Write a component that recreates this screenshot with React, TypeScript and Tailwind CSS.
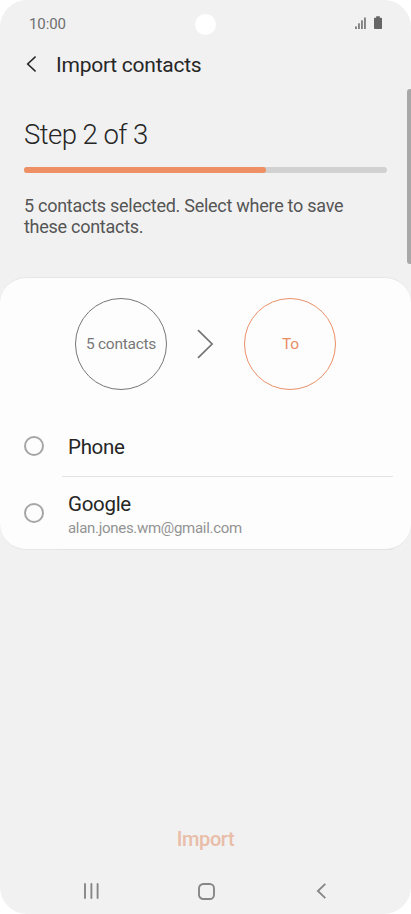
const accounts = [
  { name: 'Phone', email: '' },
  { name: 'Google', email: 'alan.jones.wm@gmail.com' },
];

const StatusBar = () => (
  <div className="relative flex h-[46px] items-center justify-between pl-[29px] pr-[29px] text-[#6f6f6f]">
    <span className="pt-[2px] text-[15px] leading-none tracking-[-0.1px]">10:00</span>
    <div className="absolute left-[195px] top-[14px] h-[21px] w-[21px] rounded-full bg-white" />
    <div className="mb-[1px] flex items-end gap-[8px]">
      <svg width="11" height="12" viewBox="0 0 11 12" fill="#828282">
        <rect x="0" y="9.4" width="1.9" height="2.6" />
        <rect x="3" y="6.3" width="1.9" height="5.7" />
        <rect x="6" y="3.3" width="1.9" height="8.7" />
        <rect x="9" y="0.5" width="1.9" height="11.5" />
      </svg>
      <svg width="8" height="13" viewBox="0 0 8 13" fill="#666666">
        <path d="M2.2 0.3h3.6v1.5H7.2a0.8 0.8 0 0 1 .8.8v9.6a0.8 0.8 0 0 1-.8.8H.8a0.8 0.8 0 0 1-.8-.8V2.6a0.8 0.8 0 0 1 .8-.8h1.4z" />
      </svg>
    </div>
  </div>
);

const NavBar = () => (
  <nav className="flex h-[46px] items-center pl-[84px]">
    <svg width="15" height="16" viewBox="0 0 15 16" stroke="#868686" strokeWidth="1.9" strokeLinecap="round">
      <path d="M1 1v14M7.4 1v14M13.6 1v14" />
    </svg>
    <svg className="ml-[99px]" width="17" height="17" viewBox="0 0 17 17" fill="none" stroke="#868686" strokeWidth="1.9">
      <rect x="1" y="1" width="15" height="15" rx="4.3" />
    </svg>
    <svg className="ml-[101px]" width="10" height="16" viewBox="0 0 10 16" fill="none" stroke="#868686" strokeWidth="1.8">
      <path d="M9.3 0.9L1.9 8l7.4 7.1" />
    </svg>
  </nav>
);

const App = () => {
  return (
    <div className="h-[914px] w-[411px] overflow-hidden bg-white font-[Roboto,sans-serif]">
      <div className="relative flex h-full flex-col overflow-hidden rounded-[27px] bg-[#f1f1f1]">
        <StatusBar />
        <header className="flex h-[36px] items-center gap-[20px] pl-[26px]">
          <svg className="mb-[1px]" width="10" height="16" viewBox="0 0 10 16" fill="none" stroke="#262626" strokeWidth="1.6">
            <path d="M9.6 0.6L1.7 8l7.9 7.4" />
          </svg>
          <h1 className="pt-[3px] text-[21px] leading-none tracking-[-0.25px] text-[#262626]">Import contacts</h1>
        </header>

        <section className="flex h-[195px] flex-col px-6 pt-[37px]">
          <h2 className="text-[27.5px] font-light leading-[32px] tracking-[-0.55px] text-[#262626]">Step 2 of 3</h2>
          <div className="mt-[16px] h-[6px] shrink-0 rounded-full bg-[#d1d1d1]">
            <div className="h-full w-2/3 rounded-full bg-[#ee9064]" />
          </div>
          <p className="mt-[22px] w-[340px] text-[18px] leading-[21px] tracking-[-0.27px] text-[#555555]">
            5 contacts selected. Select where to save these contacts.
          </p>
        </section>

        <main className="h-[273px] rounded-[26px] border border-x-0 border-[#e6e6e6] bg-[#fdfdfd]">
          <div className="flex h-[135px] items-start pl-[75px] pt-[20px]">
            <div className="flex h-[92px] w-[92px] items-center justify-center rounded-full border border-[#777777] pt-[2px] text-[15.5px] tracking-[-0.28px] text-[#777777]">
              5 contacts
            </div>
            <svg className="ml-[30px] mt-[31px]" width="17" height="30" viewBox="0 0 17 30" fill="none" stroke="#747474" strokeWidth="1.7">
              <path d="M1 1.2L15.1 15 1 28.8" />
            </svg>
            <div className="ml-[30px] flex h-[92px] w-[92px] items-center justify-center rounded-full border border-[#ea9068] pl-[1px] pt-[2px] text-[15.5px] tracking-[-0.28px] text-[#e88c63]">
              To
            </div>
          </div>
          <ul>
            {accounts.map(account => (
              <li
                key={account.name}
                className={account.email ? 'flex h-[73px] pl-6 pr-[18px]' : 'flex h-[64px] pl-6 pr-[18px]'}
              >
                <span className={account.email ? 'mt-[26px] h-5 w-5 rounded-full border-2 border-[#a6a6a6]' : 'mt-[23px] h-5 w-5 rounded-full border-2 border-[#a6a6a6]'} />
                <div className="ml-[18px] flex flex-1 flex-col border-b border-[#e3e3e3] pl-[6px]">
                  <span className={account.email ? 'mt-[15px] text-[20.5px] leading-6 tracking-[-0.3px] text-[#262626]' : 'mt-[22px] text-[20.5px] leading-6 tracking-[-0.3px] text-[#262626]'}>
                    {account.name}
                  </span>
                  {account.email && (
                    <span className="mt-[2px] text-[15px] leading-5 tracking-[-0.3px] text-[#939393]">{account.email}</span>
                  )}
                </div>
              </li>
            ))}
          </ul>
        </main>

        <div className="mt-auto flex h-[58px] items-center justify-center">
          <button className="text-[20px] font-medium leading-none tracking-[-0.4px] text-[#e9bda8]">Import</button>
        </div>
        <NavBar />
        <div className="absolute right-0 top-[89px] h-[175px] w-[4px] rounded-l-[3px] bg-[#a8a8a8]" />
      </div>
    </div>
  );
};
export default App;
